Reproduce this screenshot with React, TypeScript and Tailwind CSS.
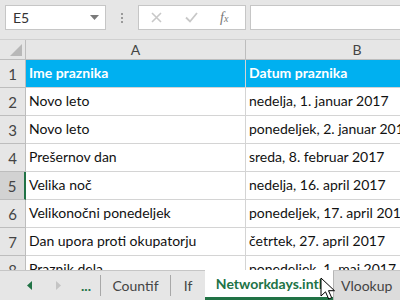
const rows: [string, string][] = [
    ['Novo leto', 'nedelja, 1. januar 2017'],
    ['Novo leto', 'ponedeljek, 2. januar 2017'],
    ['Prešernov dan', 'sreda, 8. februar 2017'],
    ['Velika noč', 'nedelja, 16. april 2017'],
    ['Velikonočni ponedeljek', 'ponedeljek, 17. april 2017'],
    ['Dan upora proti okupatorju', 'četrtek, 27. april 2017'],
    ['Praznik dela', 'ponedeljek, 1. maj 2017'],
];

const FormulaBar = () => (
    <div className="flex h-[40px] shrink-0 items-start border-b border-[#d0d0d0] pt-[5px] pl-[5px]">
        {/* Name box */}
        <div className="flex h-[25px] w-[101px] items-center justify-between border border-[#c6c6c6] bg-white pr-[6px] pl-[7px] text-[14px] text-[#333]">
            <span>E5</span>
            <svg width="9" height="5" viewBox="0 0 9 5">
                <path d="M0 0h9L4.5 5z" fill="#7a7a7a" />
            </svg>
        </div>
        <div className="flex h-[25px] w-[32px] flex-col items-center justify-center gap-[2px]">
            <span className="h-[2px] w-[2px] bg-[#9a9a9a]" />
            <span className="h-[2px] w-[2px] bg-[#9a9a9a]" />
            <span className="h-[2px] w-[2px] bg-[#9a9a9a]" />
        </div>
        <div className="flex h-[25px] w-[108px] items-center border border-[#c6c6c6] bg-white">
            <svg className="ml-[12px]" width="11" height="11" viewBox="0 0 11 11">
                <path d="M1 1l9 9M10 1l-9 9" stroke="#c8c8c8" strokeWidth="1.6" />
            </svg>
            <svg className="ml-[23px]" width="13" height="11" viewBox="0 0 13 11">
                <path d="M1 5.5l4 4L12 1" stroke="#c8c8c8" strokeWidth="1.8" fill="none" />
            </svg>
            <span className="ml-[22px] font-['Liberation_Serif',serif] text-[14px] text-[#777] italic">
                f<span className="text-[10px]">x</span>
            </span>
        </div>
        <div className="ml-[4px] h-[25px] flex-1 border border-r-0 border-[#c6c6c6] bg-white" />
    </div>
);

const Cell = ({ children, w, head }: { children?: React.ReactNode; w: string; head?: boolean }) => (
    <div
        className={`flex shrink-0 items-end overflow-hidden border-r border-b border-[#d4d4d4] pb-[4px] pl-[3px] whitespace-nowrap ${w} ${
            head ? 'bg-[#00b0f0] font-bold text-white' : 'bg-white text-[#111]'
        }`}
    >
        {children}
    </div>
);

const RowHead = ({ n, active }: { n: number; active?: boolean }) => (
    <div
        className={`flex w-[26px] shrink-0 items-end justify-center border-b border-[#bdbdbd] pb-[2px] text-[15px] text-[#444] ${
            active ? 'border-r-2 border-r-[#217346] bg-[#d2d2d2]' : 'border-r border-r-[#bdbdbd] bg-[#e6e6e6]'
        }`}
    >
        {n}
    </div>
);

const Tabs = () => (
    <div className="relative flex h-[30px] shrink-0 items-stretch border-t border-[#c6c6c6] bg-[#e6e6e6] text-[14px]">
        <div className="flex w-[100px] items-center">
            <svg className="ml-[27px]" width="5" height="9" viewBox="0 0 5 9">
                <path d="M5 0v9L0 4.5z" fill="#217346" />
            </svg>
            <svg className="ml-[24px]" width="5" height="9" viewBox="0 0 5 9">
                <path d="M0 0v9L5 4.5z" fill="#c4c4c4" />
            </svg>
            <span className="ml-[20px] font-bold text-[#217346]">...</span>
        </div>
        <div className="my-[4px] w-px bg-[#a8a8a8]" />
        <div className="flex w-[69px] items-center justify-center text-[#444]">Countif</div>
        <div className="my-[4px] w-px bg-[#a8a8a8]" />
        <div className="flex w-[34px] items-center justify-center text-[#444]">If</div>
        <div className="-mt-px flex w-[128px] items-center justify-center border-b-[3px] border-[#217346] bg-white font-bold text-[#217346]">
            Networkdays.intl
        </div>
        <div className="flex flex-1 items-center border-l border-[#b5b5b5] bg-[#dcdcdc] pl-[7px] text-[#444]">Vlookup</div>
        {/* mouse pointer */}
        <svg className="absolute top-[6px] left-[320px]" width="16" height="24" viewBox="0 0 16 24">
            <path d="M1 1v18l4.5-4.2 3.2 7.2 3-1.3-3.2-7h6z" fill="#fff" stroke="#000" strokeWidth="1" strokeLinejoin="round" />
        </svg>
    </div>
);

export default function App() {
    return (
        <div className="flex h-[300px] w-[400px] flex-col overflow-hidden bg-[#e6e6e6] font-['Lato',sans-serif] text-[14px]">
            <FormulaBar />
            {/* column headers */}
            <div className="flex h-[20px] shrink-0 border-b border-[#bdbdbd] text-[14px] text-[#444]">
                <div className="relative w-[26px] shrink-0 border-r border-[#bdbdbd]">
                    <svg className="absolute right-[3px] bottom-[3px]" width="12" height="12" viewBox="0 0 12 12">
                        <path d="M12 0v12H0z" fill="#b8b8b8" />
                    </svg>
                </div>
                <div className="flex w-[220px] shrink-0 items-center justify-center border-r border-[#bdbdbd]">A</div>
                <div className="flex w-[222px] shrink-0 items-center justify-center">B</div>
            </div>
            {/* grid */}
            <div className="flex flex-1 flex-col overflow-hidden">
                <div className="flex h-[28px] shrink-0">
                    <RowHead n={1} />
                    <Cell w="w-[220px]" head>Ime praznika</Cell>
                    <Cell w="w-[222px]" head>Datum praznika</Cell>
                </div>
                {rows.map(([a, b], i) => (
                    <div key={i} className="flex h-[28px] shrink-0">
                        <RowHead n={i + 2} active={i + 2 === 5} />
                        <Cell w="w-[220px]">{a}</Cell>
                        <Cell w="w-[222px]">{b}</Cell>
                    </div>
                ))}
            </div>
            <Tabs />
        </div>
    );
}
